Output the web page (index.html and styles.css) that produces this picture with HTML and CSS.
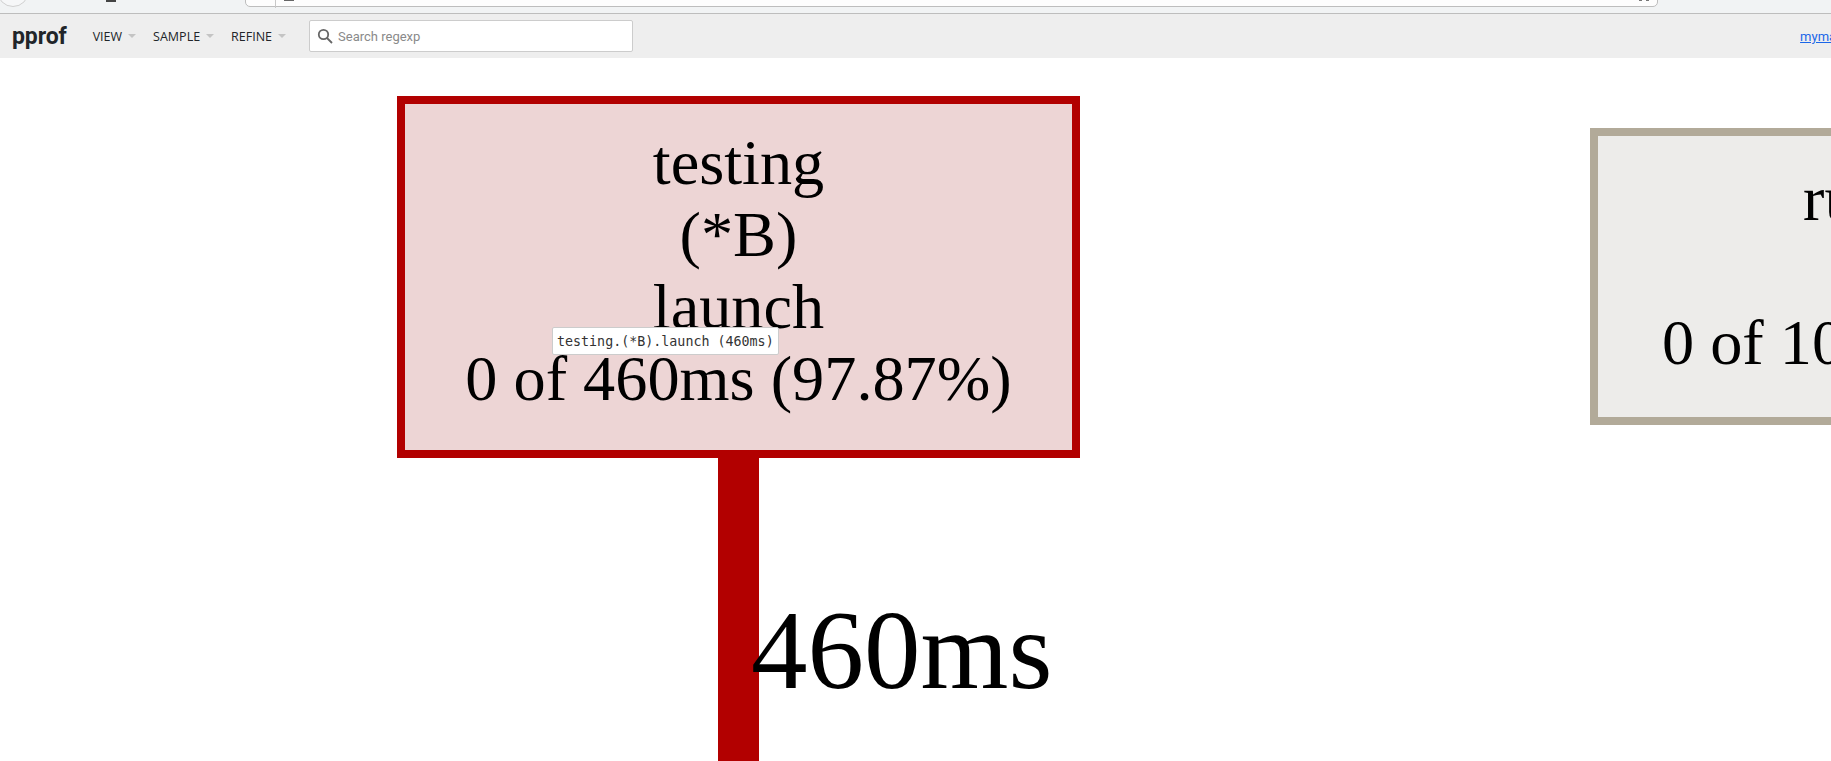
FILE: index.html
```html
<!DOCTYPE html>
<html lang="en">
<head>
<meta charset="utf-8">
<title>pprof</title>
<link rel="stylesheet" href="styles.css">
</head>
<body>
<div class="browser-strip">
  <span class="nav-button"></span>
  <span class="nav-glyph"></span>
  <div class="address-bar">
    <span class="address-divider"></span>
    <span class="address-glyph"></span>
    <span class="address-actions"><i></i><i></i></span>
  </div>
</div>
<header class="toolbar">
  <h1 class="brand">pprof</h1>
  <nav class="menus">
    <span class="menu">VIEW<i class="caret"></i></span>
    <span class="menu">SAMPLE<i class="caret"></i></span>
    <span class="menu">REFINE<i class="caret"></i></span>
  </nav>
  <label class="search">
    <svg class="search-icon" viewBox="0 0 16 16" width="16" height="16" aria-hidden="true">
      <circle cx="6.5" cy="6.5" r="4.7"></circle>
      <path d="M10 10 L15 15"></path>
    </svg>
    <input class="search-input" type="text" placeholder="Search regexp">
  </label>
  <a class="user-link" href="#">mymachine</a>
</header>
<main class="graph">
  <svg class="graph-svg" width="1831" height="703" viewBox="0 58 1831 703">
    <rect class="edge-hot" x="718" y="458" width="41" height="303"></rect>
    <text class="edge-label" x="751" y="688">460ms</text>

    <rect class="node-hot" x="401" y="100" width="675" height="354"></rect>
    <text class="node-label" x="738.5" y="184">testing</text>
    <text class="node-label" x="738.5" y="256">(*B)</text>
    <text class="node-label" x="738.5" y="328">launch</text>
    <text class="node-label" x="738.5" y="400">0 of 460ms (97.87%)</text>

    <rect class="node-cold" x="1594" y="132" width="618" height="289"></rect>
    <text class="node-label" x="1903" y="220">runtime</text>
    <text class="node-label" x="1903" y="292">main</text>
    <text class="node-label" x="1903" y="364">0 of 10ms (2.13%)</text>
  </svg>
  <div class="tooltip">testing.(*B).launch (460ms)</div>
</main>
</body>
</html>
```
FILE: styles.css
```css
* { box-sizing: border-box; }
html, body { margin: 0; height: 100%; overflow: hidden; background: #fff; }
body { width: 1831px; height: 761px; font-family: "Roboto", "Liberation Sans", sans-serif; }

.browser-strip {
  height: 14px;
  display: flex;
  align-items: flex-end;
  padding-bottom: 6px;
  background: #f1f3f4;
  border-bottom: 1px solid #bdbdbd;
  overflow: hidden;
}
.nav-button {
  flex: none;
  width: 32px;
  height: 32px;
  margin-left: -3px;
  border: 1px solid #d0d0d0;
  border-radius: 50%;
  background: #f6f7f8;
}
.nav-glyph {
  flex: none;
  width: 10px;
  height: 2px;
  margin: 0 0 5px 77px;
  align-self: flex-start;
  background: #444;
}
.address-bar {
  flex: none;
  display: flex;
  align-items: flex-start;
  width: 1413px;
  height: 20px;
  margin-left: 129px;
  border: 1px solid #bdbdbd;
  border-radius: 5px;
  background: #fdfdfd;
}
.address-divider { width: 1px; height: 20px; margin-left: 29px; background: #c8c8c8; }
.address-glyph { width: 10px; height: 2px; margin-left: 8px; margin-top: 11px; background: #666; }
.address-actions { display: flex; gap: 4px; margin-left: auto; margin-right: 8px; }
.address-actions i { width: 3px; height: 2px; margin-top: 11px; background: #777; }

.toolbar {
  height: 44px;
  display: flex;
  align-items: center;
  background: #eee;
  white-space: nowrap;
  overflow: hidden;
}
.brand {
  margin: 0 0 0 12px;
  font: 700 23px/1 "Roboto", sans-serif;
  color: #212529;
  letter-spacing: -0.1px;
}
.menus { display: flex; margin-left: 26px; margin-top: 2px; }
.menu {
  display: flex;
  align-items: center;
  font: 400 12.5px/16px "Open Sans", sans-serif;
  color: #212529;
  margin-right: 17px;
}
.caret {
  width: 0;
  height: 0;
  margin-left: 6px;
  margin-top: -2px;
  border-left: 4px solid transparent;
  border-right: 4px solid transparent;
  border-top: 4px solid #c4c4c4;
}
.search {
  flex: none;
  display: flex;
  align-items: center;
  width: 324px;
  height: 32px;
  margin-left: 6px;
  padding-left: 7px;
  background: #fff;
  border: 1px solid #ccc;
  border-radius: 2px;
}
.search-icon { flex: none; }
.search-icon circle, .search-icon path { fill: none; stroke: #666; stroke-width: 1.8; }
.search-input {
  flex: 1;
  min-width: 0;
  margin-left: 5px;
  padding: 2px 0 0;
  border: 0;
  outline: 0;
  background: transparent;
  font: 400 13px/16px "Roboto", sans-serif;
}
.search-input::placeholder { color: #8a8a8a; opacity: 1; }
.user-link {
  flex: none;
  margin-left: 1167px;
  margin-top: 2px;
  font: 400 13px/16px "Roboto", sans-serif;
  color: #1a66e8;
  text-decoration: underline;
}

.graph { position: relative; height: 703px; overflow: hidden; }
.graph-svg { display: block; }
.edge-hot { fill: #b20000; }
.edge-label { font: 400 113px "Liberation Serif", serif; fill: #000; }
.node-hot { fill: #edd5d5; stroke: #b20000; stroke-width: 8; }
.node-cold { fill: #edecea; stroke: #b2aa99; stroke-width: 8; }
.node-label { font: 400 64.3px "Liberation Serif", serif; fill: #000; text-anchor: middle; }
.tooltip {
  position: absolute;
  left: 552px;
  top: 269px;
  padding: 1px 4px 0;
  height: 28px;
  background: #fff;
  border: 1px solid #ccc;
  border-radius: 2px;
  font: 400 13.33px/26px "DejaVu Sans Mono", monospace;
  color: #333;
  white-space: nowrap;
}
```
